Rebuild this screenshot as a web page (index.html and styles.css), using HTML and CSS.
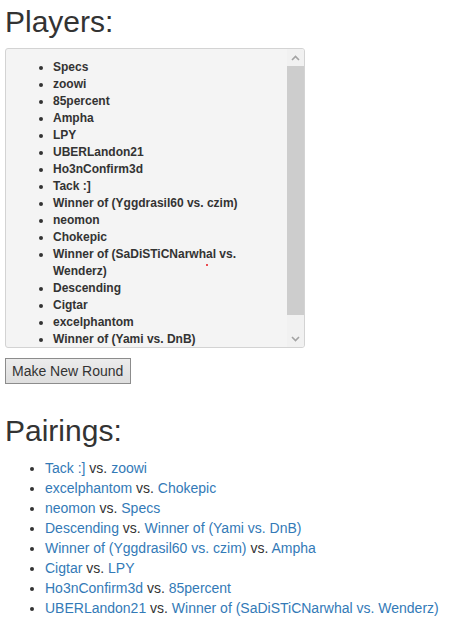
FILE: index.html
```html
<!DOCTYPE html>
<html>
<head>
<meta charset="utf-8">
<title>Players</title>
<link rel="stylesheet" href="styles.css">
</head>
<body>
<h1 class="title">Players:</h1>
<div class="players-box">
  <div class="players-scroll">
    <ul class="players">
      <li>Specs</li>
      <li>zoowi</li>
      <li>85percent</li>
      <li>Ampha</li>
      <li>LPY</li>
      <li>UBERLandon21</li>
      <li>Ho3nConfirm3d</li>
      <li>Tack :]</li>
      <li>Winner of (Yggdrasil60 vs. czim)</li>
      <li>neomon</li>
      <li>Chokepic</li>
      <li>Winner of (SaDiSTiCNarwhal vs. Wenderz)</li>
      <li>Descending</li>
      <li>Cigtar</li>
      <li>excelphantom</li>
      <li>Winner of (Yami vs. DnB)</li>
    </ul>
  </div>
  <div class="scrollbar">
    <div class="sb-btn">
      <svg width="9" height="6" viewBox="0 0 9 6"><polyline points="1,5 4.5,1.5 8,5" fill="none" stroke="#a3a3a3" stroke-width="1.6"/></svg>
    </div>
    <div class="sb-track"><div class="sb-thumb"></div></div>
    <div class="sb-btn">
      <svg width="9" height="6" viewBox="0 0 9 6"><polyline points="1,1 4.5,4.5 8,1" fill="none" stroke="#a3a3a3" stroke-width="1.6"/></svg>
    </div>
  </div>
  <span class="red-dot"></span>
</div>
<button class="new-round" type="button">Make New Round</button>
<h1 class="title pairings-title">Pairings:</h1>
<ul class="pairings">
  <li><a href="#">Tack :]</a> vs. <a href="#">zoowi</a></li>
  <li><a href="#">excelphantom</a> vs. <a href="#">Chokepic</a></li>
  <li><a href="#">neomon</a> vs. <a href="#">Specs</a></li>
  <li><a href="#">Descending</a> vs. <a href="#">Winner of (Yami vs. DnB)</a></li>
  <li><a href="#">Winner of (Yggdrasil60 vs. czim)</a> vs. <a href="#">Ampha</a></li>
  <li><a href="#">Cigtar</a> vs. <a href="#">LPY</a></li>
  <li><a href="#">Ho3nConfirm3d</a> vs. <a href="#">85percent</a></li>
  <li><a href="#">UBERLandon21</a> vs. <a href="#">Winner of (SaDiSTiCNarwhal vs. Wenderz)</a></li>
</ul>
</body>
</html>
```
FILE: styles.css
```css
html, body {
  background: #fff;
}
body {
  margin: 0;
  padding: 5px;
  font-family: "Liberation Sans", Arial, sans-serif;
  font-size: 14px;
  line-height: 20px;
  color: #333;
}
.title {
  margin: 0 0 10px 0;
  font-size: 30px;
  font-weight: normal;
  line-height: 33px;
  color: #333;
}
.pairings-title {
  margin: 30px 0 11px 0;
}
.players-box {
  position: relative;
  display: flex;
  width: 300px;
  height: 300px;
  box-sizing: border-box;
  border: 1px solid #d3d3d3;
  border-radius: 3px;
  background: #f4f4f4;
  overflow: hidden;
  margin-bottom: 10px;
}
.players-scroll {
  flex: 1;
  overflow: hidden;
  padding: 10px 0 0 8px;
}
.players {
  margin: 0;
  padding-left: 39px;
  font-size: 12px;
  font-weight: bold;
  line-height: 17px;
  color: #333;
}
.scrollbar {
  width: 17px;
  display: flex;
  flex-direction: column;
  background: #f1f1f1;
}
.sb-btn {
  height: 17px;
  display: flex;
  align-items: center;
  justify-content: center;
}
.sb-btn svg {
  display: block;
}
.sb-track {
  flex: 1;
  display: flex;
  flex-direction: column;
}
.sb-thumb {
  height: 249px;
  background: #cdcdcd;
}
.red-dot {
  position: absolute;
  left: 200px;
  top: 215px;
  width: 2px;
  height: 2px;
  background: #e8141b;
  border-radius: 1px;
}
.new-round {
  display: block;
  margin: 0;
  padding: 2px 7px 2px 6px;
  font-family: "Liberation Sans", Arial, sans-serif;
  font-size: 14px;
  line-height: 20px;
  color: #333;
  background: linear-gradient(#ececec, #dedede);
  border: 1px solid #8c8c8c;
  border-radius: 0;
}
.pairings {
  margin: 0;
  padding-left: 40px;
}
.pairings a {
  color: #337ab7;
  text-decoration: none;
}
```
